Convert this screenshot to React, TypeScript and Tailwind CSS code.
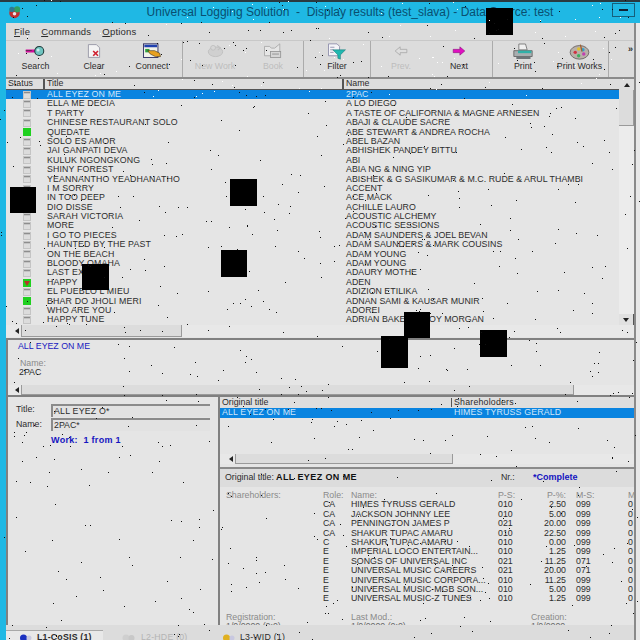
import React from "react";

const rows = [
  ["ALL EYEZ ON ME", "2PAC"],
  ["ELLA ME DECIA", "A LO DIEGO"],
  ["T PARTY", "A TASTE OF CALIFORNIA & MAGNE ARNESEN"],
  ["CHINESE RESTAURANT SOLO", "ABAJI & CLAUDE SACRE"],
  ["QUEDATE", "ABE STEWART & ANDREA ROCHA", "green"],
  ["SOLO ES AMOR", "ABEL BAZAN"],
  ["JAI GANPATI DEVA", "ABHISHEK PANDEY BITTU"],
  ["KULUK NGONGKONG", "ABI"],
  ["SHINY FOREST", "ABIA NG & NING YIP"],
  ["YEANNANTHO YEADHANATHO", "ABISHEK & G SASIKUMAR & M.C. RUDE & ARUL THAMBI"],
  ["I M SORRY", "ACCENT"],
  ["IN TOO DEEP", "ACE MACK"],
  ["DIO DISSE", "ACHILLE LAURO"],
  ["SARAH VICTORIA", "ACOUSTIC ALCHEMY"],
  ["MORE", "ACOUSTIC SESSIONS"],
  ["I GO TO PIECES", "ADAM SAUNDERS & JOEL BEVAN"],
  ["HAUNTED BY THE PAST", "ADAM SAUNDERS & MARK COUSINS"],
  ["ON THE BEACH", "ADAM YOUNG"],
  ["BLOODY OMAHA", "ADAM YOUNG"],
  ["LAST EXIT", "ADAURY MOTHE"],
  ["HAPPY", "ADEN", "red"],
  ["EL PUEBLO L MIEU", "ADIZION ETILIKA"],
  ["BHAR DO JHOLI MERI", "ADNAN SAMI & KAUSAR MUNIR", "green"],
  ["WHO ARE YOU", "ADOREI"],
  ["HAPPY TUNE", "ADRIAN BAKER & ROY MORGAN"],
];

const shares = [
  ["CA", "HIMES TYRUSS GERALD", "010", "2.50", "099"],
  ["CA", "JACKSON JOHNNY LEE", "010", "5.00", "099"],
  ["CA", "PENNINGTON JAMES P", "021", "20.00", "099"],
  ["CA", "SHAKUR TUPAC AMARU", "010", "22.50", "099"],
  ["C", "SHAKUR TUPAC AMARU", "010", "0.00", "099"],
  ["E", "IMPERIAL LOCO ENTERTAIN...", "010", "1.25", "099"],
  ["E", "SONGS OF UNIVERSAL INC", "021", "11.25", "071"],
  ["E", "UNIVERSAL MUSIC CAREERS", "021", "20.00", "071"],
  ["E", "UNIVERSAL MUSIC CORPORA...", "010", "11.25", "099"],
  ["E", "UNIVERSAL MUSIC-MGB SON...", "010", "5.00", "099"],
  ["E", "UNIVERSAL MUSIC-Z TUNES", "010", "1.25", "099"],
];

// corrupted pixels in the capture, same speckle every render
const speckle = (count: number, seed: number, y0: number, y1: number) => {
  let s = seed;
  const next = () => {
    s = (s * 1664525 + 1013904223) % 4294967296;
    return s / 4294967296;
  };
  let d = "";
  for (let i = 0; i < count; i++) {
    d += `M${Math.floor(next() * 640)} ${Math.floor(y0 + next() * (y1 - y0))}h1v1h-1z`;
  }
  return d;
};

const blocks = [
  "left-[486px] top-[8px] w-[27px] h-[27px]",
  "left-[230px] top-[179px] w-[27px] h-[27px]",
  "left-[10px] top-[187px] w-[26px] h-[26px]",
  "left-[221px] top-[250px] w-[26px] h-[27px]",
  "left-[82px] top-[264px] w-[27px] h-[26px]",
  "left-[404px] top-[312px] w-[26px] h-[26px]",
  "left-[381px] top-[336px] w-[27px] h-[32px]",
  "left-[480px] top-[330px] w-[27px] h-[27px]",
];

const Status = ({ kind }: { kind?: string }) => (
  <svg width="8" height="8" viewBox="0 0 8 8" className="block">
    <rect width="8" height="8" fill={kind ? "#1fd01f" : "#c4c4c4"} />
    {!kind && <rect x="1" y="1" width="6" height="1" fill="#8d8d8d" />}
    {!kind && <rect x="1" y="3" width="6" height="4" fill="#dcdcdc" />}
    {kind === "red" && <path d="M1 2h6L4 7z" fill="#b8322a" />}
  </svg>
);

const Icons: Record<string, React.ReactNode> = {
  search: (
    <svg width="21" height="14" viewBox="0 0 28 18">
      <rect x="1" y="7" width="13" height="4" fill="#d0109a" />
      <rect x="1" y="8" width="8" height="1" fill="#4a2a4a" />
      <circle cx="19" cy="9" r="6" fill="#6fc4c0" stroke="#1d3a3a" strokeWidth="1.4" />
      <circle cx="17.500" cy="7.500" r="2" fill="#c6ecea" />
    </svg>
  ),
  clear: (
    <svg width="16" height="16" viewBox="0 0 20 20">
      <path d="M3 2h10l4 4v12H3z" fill="#f4f4f4" stroke="#8a8a9a" />
      <path d="M9 10l6 6M15 10l-6 6" stroke="#d02030" strokeWidth="2" />
    </svg>
  ),
  connect: (
    <svg width="20" height="17" viewBox="0 0 22 20">
      <rect x="1" y="1" width="17" height="16" fill="#f2f2e8" stroke="#20205a" />
      <rect x="2" y="2" width="15" height="3" fill="#2040b0" />
      <rect x="3" y="7" width="5" height="4" fill="#30a040" />
      <path d="M6 9l8 0 6 3 1 4-6 0-6-3z" fill="#e8a020" stroke="#403010" strokeWidth=".7" />
    </svg>
  ),
  newWork: (
    <svg width="19" height="16" viewBox="0 0 22 20">
      <ellipse cx="11" cy="11" rx="9" ry="6" fill="#d0d0d0" stroke="#bcbcbc" />
      <circle cx="8" cy="6" r="3" fill="#d6d6d6" stroke="#bcbcbc" />
      <path d="M13 3l4 3-3 3" fill="none" stroke="#c0c0c0" strokeWidth="1.500" />
    </svg>
  ),
  book: (
    <svg width="20" height="17" viewBox="0 0 22 20">
      <path d="M1 4h6l2 2h4l6-5v14H1z" fill="#e6e6e6" stroke="#a6a6a6" />
      <rect x="8" y="10" width="12" height="7" fill="#d6d6d6" stroke="#969696" />
      <path d="M10 13h8" stroke="#8a8a8a" />
    </svg>
  ),
  filter: (
    <svg width="20" height="17" viewBox="0 0 22 20">
      <path d="M1 1h10l3 3v11H1z" fill="#f4f4f8" stroke="#8a8aa8" />
      <path d="M3 5h5M3 8h4M3 11h4" stroke="#8a8aa8" />
      <path d="M6 8h15l-6 6v5l-3-1v-4z" fill="#20b8b0" stroke="#187070" strokeWidth=".6" />
    </svg>
  ),
  prev: (
    <svg width="14" height="10" viewBox="0 0 16 12">
      <path d="M1 6l6-5v3h8v4H7v3z" fill="#dedede" stroke="#a8a8a8" />
    </svg>
  ),
  next: (
    <svg width="14" height="10" viewBox="0 0 16 12">
      <path d="M15 6L9 1v3H1v4h8v3z" fill="#e010c0" stroke="#7a1070" strokeWidth=".6" />
    </svg>
  ),
  print: (
    <svg width="20" height="17" viewBox="0 0 24 20">
      <path d="M7 1h8l2 7H7z" fill="#f0f0f0" stroke="#707070" />
      <path d="M1 9h22v7H1z" fill="#a8aeb0" stroke="#606060" />
      <path d="M6 9h16v3H6z" fill="#30b0a8" />
      <path d="M4 16h17v3H4z" fill="#6e7478" />
    </svg>
  ),
  palette: (
    <svg width="21" height="17" viewBox="0 0 24 20">
      <ellipse cx="12" cy="11" rx="11" ry="8" fill="#b8b0a8" stroke="#686060" />
      <circle cx="7" cy="11" r="2" fill="#d03040" />
      <circle cx="11" cy="7" r="2" fill="#e0c030" />
      <circle cx="16" cy="8" r="2" fill="#30a0d0" />
      <circle cx="17" cy="13" r="2" fill="#c040b0" />
      <circle cx="11" cy="15" r="2" fill="#40b060" />
      <path d="M13 2l2 8" stroke="#a06030" strokeWidth="1.500" />
    </svg>
  ),
};

const Tool = ({ icon, label, off, w = "w-[58px]" }: { icon: string; label: string; off?: boolean; w?: string }) => (
  <div className={`${w} flex h-full shrink-0 flex-col items-center`}>
    <div className="flex h-[20px] items-center justify-center">{Icons[icon]}</div>
    <span className={`text-[8.800px] leading-[11px] ${off ? "text-[#bcbcbc]" : "text-[#2c2c2c]"}`}>{label}</span>
  </div>
);

const Sep = () => <div className="mx-[1px] h-[36px] w-[1px] shrink-0 self-start bg-[#ababab]" />;

const Arrow = () => (
  <div className="flex h-full w-[9px] shrink-0 items-center justify-center">
    <div className="h-0 w-0 border-y-[3px] border-r-[4px] border-y-transparent border-r-[#222]" />
  </div>
);

const HScroll = ({ h, thumb, pad }: { h: string; thumb: string; pad: string }) => (
  <div className={`${h} ${pad} flex shrink-0 bg-[#e8e8e8]`}>
    <Arrow />
    <div className={`${thumb} h-full border-r border-b border-l border-[#9a9a9a] bg-[#dcdcdc]`} />
  </div>
);

export default function App() {
  return (
    <div
      className="relative flex h-[640px] w-[640px] flex-col overflow-hidden bg-[#1fb8e4] text-[8.800px] leading-[9.400px] text-[#2c2c2c]"
      style={{ fontFamily: '"Liberation Sans", Arial, sans-serif' }}
    >
      {/* title bar */}
      <div className="relative flex h-[23px] shrink-0 items-center justify-center border-t-[2px] border-[#2a3a40] pl-[60px]">
        <svg width="15" height="14" viewBox="0 0 16 16" className="absolute left-[7px] top-[3px]">
          <circle cx="8" cy="9" r="6" fill="#c03030" />
          <circle cx="11" cy="5" r="3.500" fill="#30a060" />
          <circle cx="5" cy="5" r="3" fill="#2e7a90" />
          <circle cx="8" cy="10" r="2" fill="#e8e8e8" />
        </svg>
        <span className="whitespace-pre text-[12px] text-[#0a4f70]">
          Universal Logging Solution  -  Display results (test_slava) - Data Source: test
        </span>
        <div className="absolute left-[612px] top-[1px] flex h-[14px] w-[23px] items-center justify-center border border-[#15607c]">
          <div className="h-[2px] w-[9px] bg-[#123]" />
        </div>
      </div>

      <div className="ml-[6px] min-h-0 flex-1 bg-[#e8e8e8] pr-[4px]">
        <div className="flex h-full flex-col border-r-[2px] border-[#8a8a8a] bg-[#e5e5e5]">
          {/* menu */}
          <div className="flex h-[17px] shrink-0 items-center gap-[11px] bg-[#dcdcdc] pl-[8px] text-[9.500px] tracking-[0.2px]">
            <span><u>F</u>ile</span>
            <span><u>C</u>ommands</span>
            <span><u>O</u>ptions</span>
          </div>

          {/* toolbar */}
          <div className="flex h-[39px] shrink-0 items-start border-t border-b-[2px] border-t-[#c8c8c8] border-b-[#8b8b8b] bg-[#dcdcdc]">
            <Tool icon="search" label="Search" w="w-[59px]" />
            <Tool icon="clear" label="Clear" />
            <Tool icon="connect" label="Connect" />
            <Sep />
            <div className="w-[2px] shrink-0" />
            <Tool icon="newWork" label="New Work" off />
            <Tool icon="book" label="Book" off />
            <Sep />
            <Tool icon="filter" label="Filter" w="w-[64px]" />
            <Sep />
            <Tool icon="prev" label="Prev." off />
            <Tool icon="next" label="Next" />
            <div className="w-[3px] shrink-0" />
            <Sep />
            <Tool icon="print" label="Print" />
            <Tool icon="palette" label="Print Works" w="w-[55px]" />
            <Sep />
            <span className="ml-auto mr-[1px] mt-[4px] text-[9px] font-bold">»</span>
          </div>

          {/* results list */}
          <div className="flex h-[259px] shrink-0 flex-col">
            <div className="flex h-[246px] shrink-0">
              <div className="flex min-w-0 flex-1 flex-col">
                <div className="flex h-[11px] shrink-0 items-center border-b border-[#555] bg-[#dedede]">
                  <span className="w-[39px] shrink-0 border-r-[2px] border-[#555] pl-[2px]">Status</span>
                  <span className="w-[299px] shrink-0 border-r-[2px] border-[#555] pl-[2px]">Title</span>
                  <span className="pl-[2px]">Name</span>
                </div>
                {rows.map(([title, name, kind], i) => (
                  <div
                    key={title + i}
                    className={`flex h-[9.400px] shrink-0 items-center whitespace-nowrap ${i === 0 ? "bg-[#0a84e0] text-[#cfe6fa]" : ""}`}
                  >
                    <div className="flex w-[41px] shrink-0 justify-center">
                      <Status kind={kind} />
                    </div>
                    <span className="w-[299px] shrink-0 tracking-[0.15px]">{title}</span>
                    <span className="tracking-[0.03px]">{name}</span>
                  </div>
                ))}
              </div>
              <div className="flex w-[15px] shrink-0 flex-col bg-[#ececec]">
                <div className="flex h-[11px] items-center justify-center bg-[#dedede]">
                  <div className="h-0 w-0 border-x-[3px] border-b-[4px] border-x-transparent border-b-[#222]" />
                </div>
                <div className="h-[36px] border-r border-b border-[#9a9a9a] bg-[#dcdcdc]" />
                <div className="flex-1" />
                <div className="flex h-[11px] items-center justify-center border-r border-[#555] bg-[#e0e0e0]">
                  <div className="h-0 w-0 border-x-[3px] border-t-[4px] border-x-transparent border-t-[#222]" />
                </div>
              </div>
            </div>
            <HScroll h="h-[12px]" thumb="w-[161px]" pad="pl-[6px]" />
          </div>

          {/* current row detail */}
          <div className="flex h-[57px] shrink-0 flex-col border-t-[2px] border-l-[2px] border-[#808080]">
            <div className="h-[2px]" />
            <div className="h-[10px] pl-[10px] text-[#2020c0]">ALL EYEZ ON ME</div>
            <div className="h-[7px]" />
            <div className="pl-[12px] text-[#8a8a8a]">Name:</div>
            <div className="pl-[11px]">2PAC</div>
            <div className="flex-1" />
            <HScroll h="h-[10px]" thumb="w-[553px]" pad="pl-[4px]" />
          </div>

          {/* lower split */}
          <div className="flex min-h-0 flex-1 border-t-[2px] border-l-[2px] border-[#808080]">
            <div className="flex w-[212px] shrink-0 flex-col border-r-[2px] border-[#808080] pl-[8px] pt-[7px]">
              <div className="flex h-[13px] items-center">
                <span className="w-[19px] shrink-0 -translate-y-[1px]">Title:</span>
                <span className="ml-[16px] flex h-[13px] w-[159px] items-center border-t-[2px] border-l-[2px] border-[#8b8b8b] bg-[#e2e2e2] pl-[1px] tracking-[0.2px]">ALL EYEZ O*</span>
              </div>
              <div className="mt-[1px] flex h-[13px] items-center">
                <span className="w-[19px] shrink-0">Name:</span>
                <span className="ml-[16px] flex h-[13px] w-[159px] items-center border-t-[2px] border-l-[2px] border-[#8b8b8b] bg-[#e2e2e2] pl-[1px]">2PAC*</span>
              </div>
              <div className="ml-[35px] mt-[5px] text-[9px] font-bold tracking-[0.3px] text-[#1414c0]">Work:&nbsp;&nbsp;1 from 1</div>
            </div>

            <div className="flex min-w-0 flex-1 flex-col">
              <div className="flex h-[11px] shrink-0 items-center bg-[#dedede]">
                <span className="w-[232px] shrink-0 border-r border-[#555] pl-[2px]">Original title</span>
                <span className="pl-[2px] tracking-[0.2px]">Shareholoders</span>
              </div>
              <div className="flex h-[10px] shrink-0 items-center whitespace-nowrap bg-[#0a84e0] tracking-[0.15px] text-[#cfe6fa]">
                <span className="w-[234px] shrink-0 pl-[2px]">ALL EYEZ ON ME</span>
                <span>HIMES TYRUSS GERALD</span>
              </div>
              <div className="h-[36px] shrink-0" />
              <HScroll h="h-[10px]" thumb="w-[218px]" pad="pl-[6px]" />
              <div className="h-[3px] shrink-0" />
              <div className="flex h-[20px] shrink-0 items-center border-t-[2px] border-[#8b8b8b] bg-[#dcdcdc] pl-[5px]">
                <span className="w-[51px] shrink-0">Original title:</span>
                <span className="w-[225px] shrink-0 text-[9px] font-bold tracking-[0.4px] text-[#111]">ALL EYEZ ON ME</span>
                <span className="w-[17px] shrink-0">Nr.:</span>
                <span className="ml-[15px] text-[9px] font-bold text-[#1414c0]">*Complete</span>
              </div>

              <div className="flex min-h-0 flex-1 flex-col overflow-hidden pl-[6px] pt-[4px]">
                <div className="flex h-[9.400px] shrink-0 items-center whitespace-nowrap text-[#8a8a8a]">
                  <span className="w-[97px] shrink-0">Shareholders:</span>
                  <span className="w-[28px] shrink-0">Role:</span>
                  <span className="w-[147px] shrink-0">Name:</span>
                  <span className="w-[30px] shrink-0">P-S:</span>
                  <span className="w-[38px] shrink-0 text-right">P-%:</span>
                  <span className="ml-[10px] w-[52px] shrink-0">M-S:</span>
                  <span>M</span>
                </div>
                {shares.map(([role, name, ps, pp, ms]) => (
                  <div key={role + name} className="flex h-[9.400px] shrink-0 items-center whitespace-nowrap">
                    <span className="ml-[97px] w-[28px] shrink-0">{role}</span>
                    <span className="w-[147px] shrink-0">{name}</span>
                    <span className="w-[30px] shrink-0">{ps}</span>
                    <span className="w-[38px] shrink-0 text-right">{pp}</span>
                    <span className="ml-[10px] w-[52px] shrink-0">{ms}</span>
                    <span>0</span>
                  </div>
                ))}
                <div className="mt-[9px] flex h-[9.400px] shrink-0 items-center text-[#8a8a8a]">
                  <span className="w-[125px] shrink-0">Registration:</span>
                  <span className="w-[180px] shrink-0">Last Mod.:</span>
                  <span>Creation:</span>
                </div>
                <div className="flex h-[9.400px] shrink-0 items-center text-[#6a6a6a]">
                  <span className="w-[125px] shrink-0">1/0/0000 (0:0)</span>
                  <span className="w-[180px] shrink-0">1/0/0000 (0:0)</span>
                  <span>1/0/0000</span>
                </div>
              </div>
            </div>
          </div>

          {/* tabs */}
          <div className="flex h-[15px] shrink-0 items-start overflow-hidden bg-[#dcdcdc] pt-[5px] tracking-[0.2px]">
            <div className="flex h-[12px] w-[97px] shrink-0 items-start gap-[5px] border-t border-[#a8a8a8] bg-[#e8e8e8] pl-[14px] pt-[2px] font-bold">
              <svg width="12" height="10" viewBox="0 0 12 10"><circle cx="3.500" cy="5" r="3.500" fill="#1a30c0" /><circle cx="9" cy="5" r="2.500" fill="#c8c8e0" /></svg>
              <span className="whitespace-nowrap">L1-CoSIS (1)</span>
            </div>
            <div className="flex w-[102px] shrink-0 items-start gap-[6px] pl-[19px] pt-[3px] text-[#b4b4b4]">
              <svg width="13" height="10" viewBox="0 0 13 10"><circle cx="4" cy="5" r="3.500" fill="#cfcfcf" /><circle cx="9.500" cy="5" r="3" fill="#c8c8c8" /></svg>
              <span className="whitespace-nowrap">L2-HDE (0)</span>
            </div>
            <div className="flex items-start gap-[5px] pl-[18px] pt-[3px]">
              <svg width="12" height="10" viewBox="0 0 12 10"><circle cx="3.500" cy="5" r="3.500" fill="#e0b020" /><circle cx="9" cy="5" r="2.500" fill="#c8c8e0" /></svg>
              <span className="whitespace-nowrap">L3-WID (1)</span>
            </div>
          </div>
        </div>
      </div>

      {/* capture damage: black blocks and speckle */}
      {blocks.map((b) => (
        <div key={b} className={`absolute bg-black ${b}`} />
      ))}
      <svg width="640" height="640" className="pointer-events-none absolute left-0 top-0">
        <path d={speckle(720, 11, 0, 640)} fill="#111" />
        <path d={speckle(90, 29, 0, 100)} fill="#fff" />
      </svg>
    </div>
  );
}
